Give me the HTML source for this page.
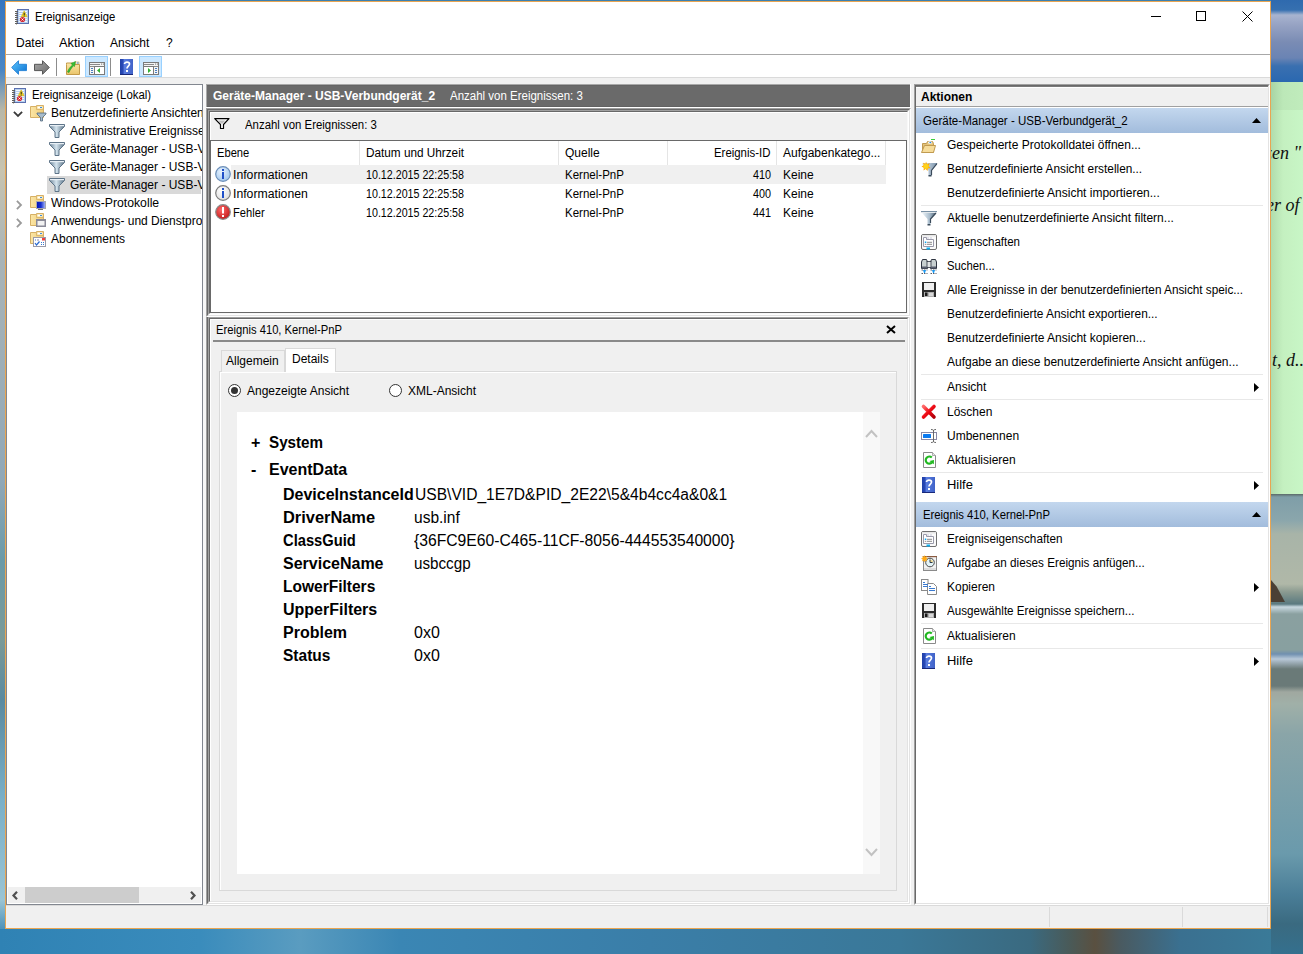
<!DOCTYPE html>
<html><head><meta charset="utf-8">
<style>
*{margin:0;padding:0;box-sizing:border-box}
html,body{width:1303px;height:954px;overflow:hidden}
body{position:relative;font-family:"Liberation Sans",sans-serif;font-size:12px;color:#000;background:#2f7aa6}
.a{position:absolute}
svg.a{display:block;overflow:visible}
.t{position:absolute;white-space:nowrap;line-height:18px;font-size:12px}
.clip{position:absolute;overflow:hidden}
</style></head><body>

<div class="a" style="left:0px;top:0px;width:1303px;height:954px;background:#3a7fb0"></div>
<div class="a" style="left:0px;top:0px;width:5px;height:954px;background:linear-gradient(180deg,#3576c0 0,#4a86c4 70px,#b8b8a8 110px,#c8c4b0 170px,#a8b4b8 260px,#90a8b8 480px,#6a9aa8 560px,#7a9a98 640px,#5a8aa0 700px,#7ab0c8 800px,#9ac4d4 900px,#4a90b8 930px,#3a86b0 954px)"></div>
<div class="clip" style="left:1271px;top:0;width:32px;height:954px"><div class="a" style="left:0;top:0;width:32px;height:82px;background:linear-gradient(180deg,#2f6aae 0,#3670b0 10px,#a8b4d0 15px,#98a4c4 24px,#7a8cb4 42px,#6a84b4 58px,#3a70b0 66px,#2a68b0 82px)"></div><div class="a" style="left:0;top:82px;width:32px;height:28px;background:linear-gradient(90deg,#a8d4a4 0,#bce8b8 12px,#c0ecbc 32px)"></div><div class="a" style="left:0;top:110px;width:32px;height:384px;background:linear-gradient(90deg,#b0dcac 0,#c4f0c0 12px,#c8f6c6 32px)"></div><div class="a" style="left:0;top:494px;width:32px;height:460px;background:linear-gradient(180deg,#5a6a68 0,#7f9ea8 3px,#8aa6ac 26px,#a8b4a8 40px,#b0b8a8 90px,#8a9a90 98px,#5a7a80 110px,#c8d8e0 113px,#8aa0a0 120px,#88a0a0 156px,#7090b0 160px,#b8c8d8 165px,#6a7a78 175px,#6a7a78 192px,#a0a8a0 198px,#a0b0a8 210px,#8aa5a8 240px,#6a9aac 360px,#4a7e98 400px,#3a6a80 430px,#34708e 460px)"></div><div class="a" style="left:0;top:580px;width:14px;height:22px;background:#4a4035;clip-path:polygon(0 0,40% 30%,100% 100%,0 100%)"></div><div class="t" style="left:-6px;top:143px;font-family:'Liberation Serif';font-style:italic;font-size:18px;line-height:20px;color:#111">zen "</div><div class="t" style="left:-5px;top:195px;font-family:'Liberation Serif';font-style:italic;font-size:18px;line-height:20px;color:#111">er of</div><div class="t" style="left:1px;top:350px;font-family:'Liberation Serif';font-style:italic;font-size:18px;line-height:20px;color:#111">t, d..</div></div>
<div class="a" style="left:0px;top:929px;width:1271px;height:25px;background:linear-gradient(90deg,#2f82b4 0,#3a8cbc 200px,#5a9cc0 300px,#3a86b4 400px,#3a7ea8 650px,#3a7898 900px,#3a6a80 1030px,#4a5a58 1070px,#5a5040 1095px,#4a5a60 1120px,#3a7090 1180px,#3a7a98 1271px)"></div>
<div class="a" style="left:5px;top:1px;width:1266px;height:928px;border:1px solid #e8a552;background:#fff"></div>
<div class="a" style="left:6px;top:77px;width:1264px;height:7px;background:#f0f0f0"></div>
<div class="a" style="left:6px;top:77px;width:1264px;height:1px;background:#dadada"></div>
<div class="a" style="left:6px;top:54px;width:1264px;height:1px;background:#a8a8a8"></div>
<div class="a" style="left:6px;top:905px;width:1264px;height:23px;background:#f0f0f0"></div>
<svg class="a" style="left:14px;top:8px" width="16" height="17" viewBox="0 0 16 17"><rect x="3.5" y="1.5" width="11" height="14" fill="#b8d0ee" stroke="#5a70b0"/><rect x="5" y="3" width="8" height="1" fill="#f4f8ff"/><rect x="5" y="5" width="8" height="1" fill="#f4f8ff"/><rect x="5" y="7" width="8" height="1" fill="#f4f8ff"/><rect x="5" y="9" width="8" height="1" fill="#f4f8ff"/><rect x="5" y="11" width="8" height="1" fill="#f4f8ff"/><rect x="5" y="13" width="8" height="1" fill="#f4f8ff"/><rect x="1" y="3" width="3" height="1" fill="#606060"/><rect x="2" y="4" width="1" height="1" fill="#c0c0c0"/><rect x="1" y="5" width="3" height="1" fill="#606060"/><rect x="2" y="6" width="1" height="1" fill="#c0c0c0"/><rect x="1" y="7" width="3" height="1" fill="#606060"/><rect x="2" y="8" width="1" height="1" fill="#c0c0c0"/><rect x="1" y="9" width="3" height="1" fill="#606060"/><rect x="2" y="10" width="1" height="1" fill="#c0c0c0"/><rect x="1" y="11" width="3" height="1" fill="#606060"/><rect x="2" y="12" width="1" height="1" fill="#c0c0c0"/><rect x="1" y="13" width="3" height="1" fill="#606060"/><rect x="2" y="14" width="1" height="1" fill="#c0c0c0"/><rect x="1" y="15" width="3" height="1" fill="#606060"/><rect x="2" y="16" width="1" height="1" fill="#c0c0c0"/><path d="M10.2 2.8 L13.2 8.8 L7.2 8.8 Z" fill="#f2d21e" stroke="#c8a818" stroke-width="0.5"/><rect x="9.7" y="4.8" width="1" height="2.5" fill="#222"/><rect x="9.7" y="7.7" width="1" height="0.8" fill="#222"/><circle cx="8.5" cy="11.5" r="2.6" fill="#d42a34"/><path d="M7.5 10.5 L9.5 12.5 M9.5 10.5 L7.5 12.5" stroke="#fff" stroke-width="0.9"/></svg>
<div class="t" style="left:35px;top:8px;font-size:12px;color:#000;transform:scaleX(0.94);transform-origin:0 0;">Ereignisanzeige</div>
<div class="a" style="left:1151px;top:16px;width:10px;height:1px;background:#000"></div>
<div class="a" style="left:1196px;top:11px;width:10px;height:10px;border:1px solid #000"></div>
<svg class="a" style="left:1242px;top:11px" width="11" height="11" viewBox="0 0 11 11"><path d="M0.5 0.5 L10.5 10.5 M10.5 0.5 L0.5 10.5" stroke="#000" stroke-width="1"/></svg>
<div class="t" style="left:16px;top:34px;font-size:12px;color:#000;">Datei</div>
<div class="t" style="left:59px;top:34px;font-size:12px;color:#000;transform:scaleX(1.07);transform-origin:0 0;">Aktion</div>
<div class="t" style="left:110px;top:34px;font-size:12px;color:#000;">Ansicht</div>
<div class="t" style="left:166px;top:34px;font-size:12px;color:#000;">?</div>
<svg class="a" style="left:11px;top:60px" width="17" height="16" viewBox="0 0 17 16"><defs><linearGradient id="ab" x1="0" x2="1" y1="0" y2="1"><stop offset="0" stop-color="#5cc8ff"/><stop offset="1" stop-color="#0a6fd0"/></linearGradient></defs><path d="M0.7 7.5 L7.5 0.7 L7.5 4.3 L15.5 4.3 L15.5 10.6 L7.5 10.6 L7.5 14.3 Z" fill="url(#ab)" stroke="#2b86d8" stroke-width="1"/></svg>
<svg class="a" style="left:34px;top:60px" width="17" height="16" viewBox="0 0 17 16"><defs><linearGradient id="af" x1="0" x2="1" y1="0" y2="1"><stop offset="0" stop-color="#a8a8a8"/><stop offset="1" stop-color="#6a6a6a"/></linearGradient></defs><path d="M15.3 7.5 L8.5 0.7 L8.5 4.3 L0.5 4.3 L0.5 10.6 L8.5 10.6 L8.5 14.3 Z" fill="url(#af)" stroke="#555" stroke-width="1"/></svg>
<div class="a" style="left:56px;top:58px;width:1px;height:18px;background:#8c8c8c"></div>
<svg class="a" style="left:65px;top:60px" width="16" height="16" viewBox="0 0 16 16"><defs><linearGradient id="fug" x1="0" x2="0" y1="0" y2="1"><stop offset="0" stop-color="#fbe7a8"/><stop offset="1" stop-color="#eac46a"/></linearGradient></defs><path d="M1.5 4.5 L1.5 14.5 L14.5 14.5 L14.5 4.5 L9 4.5 L8 3 L1.5 3 Z" fill="url(#fug)" stroke="#c39a48"/><rect x="10" y="2" width="4" height="2" fill="#fff" stroke="#c39a48" stroke-width="0.6"/><rect x="12" y="2.5" width="1.5" height="1" fill="#3a8ae0"/><path d="M2.5 12 C3.5 9 5 7 7.5 5 L6 3.5 L10.5 1.5 L9.5 6.5 L8.5 5.8 C6.5 8 5 10 4 12.5 Z" fill="#36c236" stroke="#1a8a1a" stroke-width="0.5"/></svg>
<div class="a" style="left:85px;top:56px;width:23px;height:21px;background:#cce8ff;border:1px solid #99d1ff"></div>
<svg class="a" style="left:89px;top:62px" width="16" height="13" viewBox="0 0 16 13"><rect x="0.5" y="0.5" width="15" height="12" fill="#f4f4f4" stroke="#7a7a7a"/><rect x="1" y="2" width="10" height="1" fill="#8a8a8a"/><rect x="12" y="1.5" width="1.2" height="1.2" fill="#8a8a8a"/><rect x="14" y="1.5" width="1.2" height="1.2" fill="#8a8a8a"/><rect x="1" y="4" width="14" height="1" fill="#8a8a8a"/><rect x="5.5" y="4.5" width="10" height="8" fill="#fff" stroke="#7a7a7a"/><rect x="2" y="6" width="2" height="1" fill="#4a7fc0"/><rect x="2" y="8" width="2" height="1" fill="#4a7fc0"/><rect x="2" y="10" width="2" height="1" fill="#4a7fc0"/><path d="M11 6 L8 8.5 L11 11 Z" fill="#32b032"/></svg>
<div class="a" style="left:110px;top:58px;width:1px;height:18px;background:#8c8c8c"></div>
<svg class="a" style="left:119px;top:59px" width="16" height="16" viewBox="0 0 16 16"><defs><linearGradient id="hpg" x1="0" x2="1"><stop offset="0" stop-color="#2040a8"/><stop offset=".25" stop-color="#2a4ab8"/><stop offset=".3" stop-color="#5a7ee0"/><stop offset="1" stop-color="#4062c8"/></linearGradient></defs><rect x="1" y="0" width="13" height="16" fill="url(#hpg)"/><rect x="1" y="15" width="13" height="1" fill="#18287a"/><path d="M5.5 5 C5.5 2.5 10.5 2.5 10.5 5 C10.5 7 8 7.2 8 9.5" fill="none" stroke="#fff" stroke-width="1.7"/><rect x="7" y="11" width="2" height="2" fill="#fff"/></svg>
<div class="a" style="left:139px;top:56px;width:23px;height:21px;background:#cce8ff;border:1px solid #99d1ff"></div>
<svg class="a" style="left:143px;top:62px" width="16" height="13" viewBox="0 0 16 13"><rect x="0.5" y="0.5" width="15" height="12" fill="#f4f4f4" stroke="#7a7a7a"/><rect x="1" y="2" width="10" height="1" fill="#8a8a8a"/><rect x="12" y="1.5" width="1.2" height="1.2" fill="#8a8a8a"/><rect x="14" y="1.5" width="1.2" height="1.2" fill="#8a8a8a"/><rect x="1" y="4" width="14" height="1" fill="#8a8a8a"/><rect x="0.5" y="4.5" width="10" height="8" fill="#fff" stroke="#7a7a7a"/><rect x="12" y="6" width="2" height="1" fill="#4a7fc0"/><rect x="12" y="8" width="2" height="1" fill="#4a7fc0"/><rect x="12" y="10" width="2" height="1" fill="#4a7fc0"/><path d="M5 6 L8 8.5 L5 11 Z" fill="#32b032"/></svg>
<!-- LEFT TREE PANEL -->
<div class="a" style="left:6px;top:84px;width:197px;height:821px;border:1px solid #828790;background:#fff"></div>
<div class="a" style="left:203px;top:84px;width:3px;height:821px;background:#f7f7f7"></div>
<div class="a" style="left:911px;top:84px;width:3px;height:821px;background:#f0f0f0"></div>

<!-- MIDDLE: dark header -->
<div class="a" style="left:206px;top:84px;width:704px;height:23px;background:#6a6a6a;border-top:1px solid #a8a8a8;border-bottom:1px solid #626262"></div><div class="a" style="left:206px;top:85px;width:704px;height:1px;background:#646464"></div><div class="a" style="left:206px;top:84px;width:1px;height:23px;background:#a8a8a8"></div>
<div class="a" style="left:206px;top:107px;width:705px;height:1px;background:#fff"></div>
<!-- upper outer -->
<div class="a" style="left:206px;top:108px;width:705px;height:209px;border-top:1px solid #a0a0a0;border-left:1px solid #a0a0a0;border-right:1px solid #fff;border-bottom:1px solid #fff;background:#f0f0f0"></div>
<div class="a" style="left:207px;top:109px;width:703px;height:207px;border-top:1px solid #696969;border-left:1px solid #696969;border-right:1px solid #e3e3e3;border-bottom:1px solid #e3e3e3"></div>
<!-- upper inner -->
<div class="a" style="left:208px;top:110px;width:701px;height:205px;border-top:1px solid #a0a0a0;border-left:1px solid #a0a0a0;border-right:1px solid #fff;border-bottom:1px solid #fff"></div>
<div class="a" style="left:209px;top:111px;width:699px;height:203px;border-top:1px solid #696969;border-left:1px solid #696969;border-right:1px solid #f8f8f8;border-bottom:1px solid #f8f8f8;background:#f0f0f0"></div>
<div class="a" style="left:210px;top:112px;width:697px;height:1px;background:#fff"></div>
<div class="a" style="left:210px;top:112px;width:1px;height:28px;background:#fff"></div>
<!-- list -->
<div class="a" style="left:210px;top:140px;width:697px;height:173px;border:1px solid #696969;border-right-color:#696969;background:#fff"></div>

<!-- lower outer -->
<div class="a" style="left:206px;top:317px;width:705px;height:588px;border-left:1px solid #a0a0a0;border-right:1px solid #fff;border-bottom:1px solid #fff"></div>
<div class="a" style="left:207px;top:317px;width:703px;height:587px;border-left:1px solid #696969;border-right:1px solid #e3e3e3;border-bottom:1px solid #e3e3e3"></div>
<!-- lower inner -->
<div class="a" style="left:208px;top:317px;width:701px;height:586px;border-top:1px solid #a0a0a0;border-left:1px solid #a0a0a0;border-right:1px solid #fff;border-bottom:1px solid #fff"></div>
<div class="a" style="left:209px;top:318px;width:699px;height:584px;border-top:1px solid #696969;border-left:1px solid #696969;border-right:1px solid #e3e3e3;border-bottom:1px solid #e3e3e3;background:#f0f0f0"></div>
<div class="a" style="left:210px;top:319px;width:697px;height:1px;background:#fff"></div>
<div class="a" style="left:210px;top:319px;width:1px;height:582px;background:#fff"></div>

<!-- RIGHT PANEL -->
<div class="a" style="left:914px;top:84px;width:356px;height:821px;border-top:1px solid #a0a0a0;border-left:1px solid #a0a0a0;border-right:1px solid #fff;border-bottom:1px solid #fff"></div>
<div class="a" style="left:915px;top:85px;width:354px;height:819px;border-top:1px solid #696969;border-left:1px solid #696969;border-right:1px solid #e3e3e3;border-bottom:1px solid #e3e3e3;background:#fff"></div>

<!-- status bar -->
<div class="a" style="left:6px;top:905px;width:1264px;height:1px;background:#dadada"></div>
<div class="a" style="left:1049px;top:907px;width:1px;height:20px;background:#dadada"></div>
<div class="a" style="left:1182px;top:907px;width:1px;height:20px;background:#dadada"></div>
<div class="a" style="left:1267px;top:907px;width:1px;height:20px;background:#dadada"></div>

<div class="clip" style="left:7px;top:85px;width:195px;height:819px"><div class="a" style="margin-left:-7px;margin-top:-85px;left:47px;top:176px;width:154px;height:18px;background:#d9d9d9"></div><svg class="a" style="margin-left:-7px;margin-top:-85px;left:11px;top:87px" width="16" height="17" viewBox="0 0 16 17"><rect x="3.5" y="1.5" width="11" height="14" fill="#b8d0ee" stroke="#5a70b0"/><rect x="5" y="3" width="8" height="1" fill="#f4f8ff"/><rect x="5" y="5" width="8" height="1" fill="#f4f8ff"/><rect x="5" y="7" width="8" height="1" fill="#f4f8ff"/><rect x="5" y="9" width="8" height="1" fill="#f4f8ff"/><rect x="5" y="11" width="8" height="1" fill="#f4f8ff"/><rect x="5" y="13" width="8" height="1" fill="#f4f8ff"/><rect x="1" y="3" width="3" height="1" fill="#606060"/><rect x="2" y="4" width="1" height="1" fill="#c0c0c0"/><rect x="1" y="5" width="3" height="1" fill="#606060"/><rect x="2" y="6" width="1" height="1" fill="#c0c0c0"/><rect x="1" y="7" width="3" height="1" fill="#606060"/><rect x="2" y="8" width="1" height="1" fill="#c0c0c0"/><rect x="1" y="9" width="3" height="1" fill="#606060"/><rect x="2" y="10" width="1" height="1" fill="#c0c0c0"/><rect x="1" y="11" width="3" height="1" fill="#606060"/><rect x="2" y="12" width="1" height="1" fill="#c0c0c0"/><rect x="1" y="13" width="3" height="1" fill="#606060"/><rect x="2" y="14" width="1" height="1" fill="#c0c0c0"/><rect x="1" y="15" width="3" height="1" fill="#606060"/><rect x="2" y="16" width="1" height="1" fill="#c0c0c0"/><path d="M10.2 2.8 L13.2 8.8 L7.2 8.8 Z" fill="#f2d21e" stroke="#c8a818" stroke-width="0.5"/><rect x="9.7" y="4.8" width="1" height="2.5" fill="#222"/><rect x="9.7" y="7.7" width="1" height="0.8" fill="#222"/><circle cx="8.5" cy="11.5" r="2.6" fill="#d42a34"/><path d="M7.5 10.5 L9.5 12.5 M9.5 10.5 L7.5 12.5" stroke="#fff" stroke-width="0.9"/></svg><div class="t" style="margin-left:-7px;margin-top:-85px;left:32px;top:86px;font-size:12px;color:#000;transform:scaleX(0.95);transform-origin:0 0;">Ereignisanzeige (Lokal)</div><svg class="a" style="margin-left:-7px;margin-top:-85px;left:13px;top:111px" width="10" height="6" viewBox="0 0 10 6"><path d="M0.9 0.9 L5 5 L9.1 0.9" fill="none" stroke="#3a3a3a" stroke-width="1.8"/></svg><svg class="a" style="margin-left:-7px;margin-top:-85px;left:30px;top:105px" width="18" height="17" viewBox="0 0 18 17"><defs><linearGradient id="fdg" x1="0" x2="1"><stop offset="0" stop-color="#fbe6a6"/><stop offset="1" stop-color="#f0cc78"/></linearGradient></defs><path d="M0.5 1.5 L6.5 1.5 L6.5 0.5 L13.5 0.5 L13.5 12.5 L0.5 12.5 Z" fill="url(#fdg)" stroke="#d6b066"/><path d="M6.5 1.5 L6.5 4.5 L13.5 4.5" fill="none" stroke="#d6b066" stroke-width="0.8"/><rect x="7.5" y="1.5" width="5" height="2" fill="#fff"/><rect x="10" y="2" width="2" height="1" fill="#3a90e0"/><path d="M7 8 L16 8 L16 9 L12.5 12.5 L12.5 16 L10.5 16 L10.5 12.5 L7 9 Z" fill="#a8bccc" stroke="#50687c" stroke-width="0.8"/></svg><div class="t" style="margin-left:-7px;margin-top:-85px;left:51px;top:104px;font-size:12px;color:#000;">Benutzerdefinierte Ansichten</div><svg class="a" style="margin-left:-7px;margin-top:-85px;left:49px;top:124px" width="16" height="15" viewBox="0 0 16 15"><defs><linearGradient id="fg" x1="0" x2="1"><stop offset="0" stop-color="#6a8296"/><stop offset=".45" stop-color="#d4e4ee"/><stop offset="1" stop-color="#5a7286"/></linearGradient></defs><path d="M0.5 0.5 L15.5 0.5 L15.5 2.5 L10 8 L10 13.5 L6 13.5 L6 8 L0.5 2.5 Z" fill="url(#fg)" stroke="#5e7488" stroke-width="1"/><rect x="1" y="1" width="14" height="1.2" fill="#e8f0f6"/></svg><div class="t" style="margin-left:-7px;margin-top:-85px;left:70px;top:122px;font-size:12px;color:#000;">Administrative Ereignisse</div><svg class="a" style="margin-left:-7px;margin-top:-85px;left:49px;top:142px" width="16" height="15" viewBox="0 0 16 15"><defs><linearGradient id="fg" x1="0" x2="1"><stop offset="0" stop-color="#6a8296"/><stop offset=".45" stop-color="#d4e4ee"/><stop offset="1" stop-color="#5a7286"/></linearGradient></defs><path d="M0.5 0.5 L15.5 0.5 L15.5 2.5 L10 8 L10 13.5 L6 13.5 L6 8 L0.5 2.5 Z" fill="url(#fg)" stroke="#5e7488" stroke-width="1"/><rect x="1" y="1" width="14" height="1.2" fill="#e8f0f6"/></svg><div class="t" style="margin-left:-7px;margin-top:-85px;left:70px;top:140px;font-size:12px;color:#000;">Geräte-Manager - USB-Verbundgerät</div><svg class="a" style="margin-left:-7px;margin-top:-85px;left:49px;top:160px" width="16" height="15" viewBox="0 0 16 15"><defs><linearGradient id="fg" x1="0" x2="1"><stop offset="0" stop-color="#6a8296"/><stop offset=".45" stop-color="#d4e4ee"/><stop offset="1" stop-color="#5a7286"/></linearGradient></defs><path d="M0.5 0.5 L15.5 0.5 L15.5 2.5 L10 8 L10 13.5 L6 13.5 L6 8 L0.5 2.5 Z" fill="url(#fg)" stroke="#5e7488" stroke-width="1"/><rect x="1" y="1" width="14" height="1.2" fill="#e8f0f6"/></svg><div class="t" style="margin-left:-7px;margin-top:-85px;left:70px;top:158px;font-size:12px;color:#000;">Geräte-Manager - USB-Verbundgerät</div><svg class="a" style="margin-left:-7px;margin-top:-85px;left:49px;top:178px" width="16" height="15" viewBox="0 0 16 15"><defs><linearGradient id="fg" x1="0" x2="1"><stop offset="0" stop-color="#6a8296"/><stop offset=".45" stop-color="#d4e4ee"/><stop offset="1" stop-color="#5a7286"/></linearGradient></defs><path d="M0.5 0.5 L15.5 0.5 L15.5 2.5 L10 8 L10 13.5 L6 13.5 L6 8 L0.5 2.5 Z" fill="url(#fg)" stroke="#5e7488" stroke-width="1"/><rect x="1" y="1" width="14" height="1.2" fill="#e8f0f6"/></svg><div class="t" style="margin-left:-7px;margin-top:-85px;left:70px;top:176px;font-size:12px;color:#000;">Geräte-Manager - USB-Verbundgerät_2</div><svg class="a" style="margin-left:-7px;margin-top:-85px;left:16px;top:200px" width="6" height="10" viewBox="0 0 6 10"><path d="M0.9 0.9 L5 5 L0.9 9.1" fill="none" stroke="#9a9a9a" stroke-width="1.8"/></svg><svg class="a" style="margin-left:-7px;margin-top:-85px;left:30px;top:195px" width="18" height="17" viewBox="0 0 18 17"><defs><linearGradient id="fdg" x1="0" x2="1"><stop offset="0" stop-color="#fbe6a6"/><stop offset="1" stop-color="#f0cc78"/></linearGradient></defs><path d="M0.5 1.5 L6.5 1.5 L6.5 0.5 L13.5 0.5 L13.5 12.5 L0.5 12.5 Z" fill="url(#fdg)" stroke="#d6b066"/><path d="M6.5 1.5 L6.5 4.5 L13.5 4.5" fill="none" stroke="#d6b066" stroke-width="0.8"/><rect x="7.5" y="1.5" width="5" height="2" fill="#fff"/><rect x="10" y="2" width="2" height="1" fill="#3a90e0"/><defs><linearGradient id="mong" x1="0" x2="1"><stop offset="0" stop-color="#0010b8"/><stop offset=".5" stop-color="#1830d0"/><stop offset="1" stop-color="#b0c0f8"/></linearGradient></defs><rect x="6.5" y="6.5" width="9" height="7" fill="url(#mong)" stroke="#a8a8b0"/><rect x="8" y="14" width="5" height="1" fill="#707070"/></svg><div class="t" style="margin-left:-7px;margin-top:-85px;left:51px;top:194px;font-size:12px;color:#000;transform:scaleX(1.02);transform-origin:0 0;">Windows-Protokolle</div><svg class="a" style="margin-left:-7px;margin-top:-85px;left:16px;top:218px" width="6" height="10" viewBox="0 0 6 10"><path d="M0.9 0.9 L5 5 L0.9 9.1" fill="none" stroke="#9a9a9a" stroke-width="1.8"/></svg><svg class="a" style="margin-left:-7px;margin-top:-85px;left:30px;top:213px" width="18" height="17" viewBox="0 0 18 17"><defs><linearGradient id="fdg" x1="0" x2="1"><stop offset="0" stop-color="#fbe6a6"/><stop offset="1" stop-color="#f0cc78"/></linearGradient></defs><path d="M0.5 1.5 L6.5 1.5 L6.5 0.5 L13.5 0.5 L13.5 12.5 L0.5 12.5 Z" fill="url(#fdg)" stroke="#d6b066"/><path d="M6.5 1.5 L6.5 4.5 L13.5 4.5" fill="none" stroke="#d6b066" stroke-width="0.8"/><rect x="7.5" y="1.5" width="5" height="2" fill="#fff"/><rect x="10" y="2" width="2" height="1" fill="#3a90e0"/><rect x="6.75" y="6.75" width="8.5" height="6.5" fill="#f2f2f2" stroke="#8a8a98" stroke-width="1.5"/><rect x="6" y="6" width="10" height="2" fill="#8a8a98"/></svg><div class="t" style="margin-left:-7px;margin-top:-85px;left:51px;top:212px;font-size:12px;color:#000;">Anwendungs- und Dienstprotokolle</div><svg class="a" style="margin-left:-7px;margin-top:-85px;left:30px;top:231px" width="18" height="17" viewBox="0 0 18 17"><defs><linearGradient id="fdg" x1="0" x2="1"><stop offset="0" stop-color="#fbe6a6"/><stop offset="1" stop-color="#f0cc78"/></linearGradient></defs><path d="M0.5 1.5 L6.5 1.5 L6.5 0.5 L13.5 0.5 L13.5 12.5 L0.5 12.5 Z" fill="url(#fdg)" stroke="#d6b066"/><path d="M6.5 1.5 L6.5 4.5 L13.5 4.5" fill="none" stroke="#d6b066" stroke-width="0.8"/><rect x="7.5" y="1.5" width="5" height="2" fill="#fff"/><rect x="10" y="2" width="2" height="1" fill="#3a90e0"/><rect x="3.5" y="6.5" width="12" height="9" fill="#fff" stroke="#9a9aa8"/><rect x="12" y="7" width="3" height="2.5" fill="#f04040"/><rect x="5" y="8.5" width="1" height="1" fill="#3a7ad0"/><rect x="7" y="8.5" width="2" height="1" fill="#8a8ab0"/><rect x="11" y="11" width="1" height="1" fill="#3a7ad0"/><rect x="13" y="11" width="1" height="1" fill="#3a7ad0"/><rect x="11" y="13" width="1" height="1" fill="#3a7ad0"/><rect x="13" y="13" width="1" height="1" fill="#3a7ad0"/><path d="M5 12 L6.5 14 L9.5 10.5" fill="none" stroke="#2a6ad0" stroke-width="1.2"/></svg><div class="t" style="margin-left:-7px;margin-top:-85px;left:51px;top:230px;font-size:12px;color:#000;">Abonnements</div></div>
<div class="a" style="left:8px;top:887px;width:193px;height:16px;background:#f0f0f0"></div>
<div class="a" style="left:25px;top:887px;width:114px;height:16px;background:#cdcdcd"></div>
<svg class="a" style="left:12px;top:891px" width="6" height="9" viewBox="0 0 6 9"><path d="M5 0.8 L1.5 4.5 L5 8.2" fill="none" stroke="#505050" stroke-width="2.2"/></svg>
<svg class="a" style="left:190px;top:891px" width="6" height="9" viewBox="0 0 6 9"><path d="M1 0.8 L4.5 4.5 L1 8.2" fill="none" stroke="#505050" stroke-width="2.2"/></svg>
<div class="t" style="left:213px;top:87px;font-size:12px;font-weight:bold;color:#fff;">Geräte-Manager - USB-Verbundgerät_2</div><div class="t" style="left:450px;top:87px;font-size:12px;color:#fff;transform:scaleX(0.957);transform-origin:0 0;">Anzahl von Ereignissen: 3</div><svg class="a" style="left:214px;top:118px" width="16" height="12" viewBox="0 0 16 12"><path d="M0.7 0.7 L15 0.7 L9.5 6.5 L9.5 10.5 L6.5 10.5 L6.5 6.5 Z" fill="#fff" stroke="#000" stroke-width="1.2" stroke-linejoin="round"/><path d="M4 2.5 L11.5 2.5 L8 6 Z" fill="#bdbdbd"/></svg><div class="t" style="left:245px;top:116px;font-size:12px;color:#000;transform:scaleX(0.95);transform-origin:0 0;">Anzahl von Ereignissen: 3</div><div class="t" style="left:217px;top:144px;font-size:12px;color:#000;transform:scaleX(0.93);transform-origin:0 0;">Ebene</div><div class="t" style="left:366px;top:144px;font-size:12px;color:#000;transform:scaleX(0.98);transform-origin:0 0;">Datum und Uhrzeit</div><div class="t" style="left:565px;top:144px;font-size:12px;color:#000;">Quelle</div><div class="t" style="left:714px;top:144px;font-size:12px;color:#000;transform:scaleX(0.95);transform-origin:0 0;">Ereignis-ID</div><div class="t" style="left:783px;top:144px;font-size:12px;color:#000;">Aufgabenkatego...</div><div class="a" style="left:359px;top:141px;width:1px;height:24px;background:#e5e5e5"></div><div class="a" style="left:558px;top:141px;width:1px;height:24px;background:#e5e5e5"></div><div class="a" style="left:667px;top:141px;width:1px;height:24px;background:#e5e5e5"></div><div class="a" style="left:776px;top:141px;width:1px;height:24px;background:#e5e5e5"></div><div class="a" style="left:885px;top:141px;width:1px;height:24px;background:#e5e5e5"></div><div class="a" style="left:231px;top:165px;width:655px;height:19px;background:#f0f0f0"></div><svg class="a" style="left:215px;top:166px" width="16" height="16" viewBox="0 0 16 16"><defs><radialGradient id="ib" cx=".4" cy=".35" r=".7"><stop offset="0" stop-color="#eaf4ff"/><stop offset="1" stop-color="#9cc4ec"/></radialGradient></defs><circle cx="8" cy="8" r="7.3" fill="url(#ib)" stroke="#6d8fb8" stroke-width="1.2"/><rect x="7" y="3" width="2" height="2" fill="#1f4fc8"/><rect x="7" y="6" width="2" height="7" fill="#1f4fc8"/></svg><div class="t" style="left:233px;top:166px;font-size:12px;color:#000;transform:scaleX(1.02);transform-origin:0 0;">Informationen</div><div class="t" style="left:366px;top:166px;font-size:12px;color:#000;transform:scaleX(0.89);transform-origin:0 0;">10.12.2015 22:25:58</div><div class="t" style="left:565px;top:166px;font-size:12px;color:#000;transform:scaleX(0.96);transform-origin:0 0;">Kernel-PnP</div><div class="t" style="left:700px;width:71px;text-align:right;top:166px;transform:scaleX(0.9);transform-origin:100% 0">410</div><div class="t" style="left:783px;top:166px;font-size:12px;color:#000;">Keine</div><svg class="a" style="left:215px;top:185px" width="16" height="16" viewBox="0 0 16 16"><defs><radialGradient id="iw" cx=".4" cy=".35" r=".7"><stop offset="0" stop-color="#ffffff"/><stop offset="1" stop-color="#dcdcdc"/></radialGradient></defs><circle cx="8" cy="8" r="7.3" fill="url(#iw)" stroke="#7d7d7d" stroke-width="1.2"/><rect x="7" y="3" width="2" height="2" fill="#1f4fc8"/><rect x="7" y="6" width="2" height="7" fill="#1f4fc8"/></svg><div class="t" style="left:233px;top:185px;font-size:12px;color:#000;transform:scaleX(1.02);transform-origin:0 0;">Informationen</div><div class="t" style="left:366px;top:185px;font-size:12px;color:#000;transform:scaleX(0.89);transform-origin:0 0;">10.12.2015 22:25:58</div><div class="t" style="left:565px;top:185px;font-size:12px;color:#000;transform:scaleX(0.96);transform-origin:0 0;">Kernel-PnP</div><div class="t" style="left:700px;width:71px;text-align:right;top:185px;transform:scaleX(0.9);transform-origin:100% 0">400</div><div class="t" style="left:783px;top:185px;font-size:12px;color:#000;">Keine</div><svg class="a" style="left:215px;top:204px" width="16" height="16" viewBox="0 0 16 16"><defs><radialGradient id="er" cx=".4" cy=".35" r=".7"><stop offset="0" stop-color="#ff6a6a"/><stop offset="1" stop-color="#c01818"/></radialGradient></defs><circle cx="8" cy="8" r="7.3" fill="url(#er)" stroke="#8a8a8a" stroke-width="1.2"/><rect x="7" y="3" width="2" height="6.5" fill="#fff"/><rect x="7" y="11" width="2" height="2" fill="#fff"/></svg><div class="t" style="left:233px;top:204px;font-size:12px;color:#000;transform:scaleX(0.93);transform-origin:0 0;">Fehler</div><div class="t" style="left:366px;top:204px;font-size:12px;color:#000;transform:scaleX(0.89);transform-origin:0 0;">10.12.2015 22:25:58</div><div class="t" style="left:565px;top:204px;font-size:12px;color:#000;transform:scaleX(0.96);transform-origin:0 0;">Kernel-PnP</div><div class="t" style="left:700px;width:71px;text-align:right;top:204px;transform:scaleX(0.9);transform-origin:100% 0">441</div><div class="t" style="left:783px;top:204px;font-size:12px;color:#000;">Keine</div><div class="t" style="left:216px;top:321px;font-size:12px;color:#000;transform:scaleX(0.935);transform-origin:0 0;">Ereignis 410, Kernel-PnP</div><svg class="a" style="left:886px;top:325px" width="10" height="9" viewBox="0 0 10 9"><path d="M1 1 L9 8 M9 1 L1 8" stroke="#000" stroke-width="2"/></svg><div class="a" style="left:213px;top:340px;width:692px;height:2px;background:#8a8a8a"></div><div class="a" style="left:219px;top:371px;width:678px;height:520px;background:#f0f0f0;border:1px solid #d9d9d9"></div><div class="a" style="left:220px;top:372px;width:676px;height:518px;border-top:1px solid #fff;border-left:1px solid #fff"></div><div class="a" style="left:221px;top:350px;width:64px;height:22px;background:#f0f0f0;border:1px solid #d9d9d9;border-bottom:none"></div><div class="a" style="left:285px;top:348px;width:51px;height:24px;background:#fff;border:1px solid #d9d9d9;border-bottom:none"></div><div class="t" style="left:226px;top:352px;font-size:12px;color:#000;">Allgemein</div><div class="t" style="left:292px;top:350px;font-size:12px;color:#000;">Details</div><svg class="a" style="left:228px;top:384px" width="13" height="13" viewBox="0 0 13 13"><circle cx="6.5" cy="6.5" r="6" fill="#fff" stroke="#333" stroke-width="1"/><circle cx="6.5" cy="6.5" r="3.5" fill="#333"/></svg><div class="t" style="left:247px;top:382px;font-size:12px;color:#000;">Angezeigte Ansicht</div><svg class="a" style="left:389px;top:384px" width="13" height="13" viewBox="0 0 13 13"><circle cx="6.5" cy="6.5" r="6" fill="#fff" stroke="#333" stroke-width="1"/></svg><div class="t" style="left:408px;top:382px;font-size:12px;color:#000;">XML-Ansicht</div><div class="a" style="left:237px;top:412px;width:643px;height:462px;background:#fff"></div><div class="a" style="left:863px;top:412px;width:17px;height:462px;background:#f8f8f8"></div><svg class="a" style="left:865px;top:429px" width="13" height="9" viewBox="0 0 13 9"><path d="M1 8 L6.5 2 L12 8" fill="none" stroke="#c2c2c2" stroke-width="2"/></svg><svg class="a" style="left:865px;top:848px" width="13" height="9" viewBox="0 0 13 9"><path d="M1 1 L6.5 7 L12 1" fill="none" stroke="#c2c2c2" stroke-width="2"/></svg><div class="t" style="left:251px;top:434px;font-size:16px;font-weight:bold;color:#000;">+</div><div class="t" style="left:269px;top:434px;font-size:16px;font-weight:bold;color:#000;transform:scaleX(0.95);transform-origin:0 0;">System</div><div class="t" style="left:251px;top:461px;font-size:16px;font-weight:bold;color:#000;">-</div><div class="t" style="left:269px;top:461px;font-size:16px;font-weight:bold;color:#000;">EventData</div><div class="t" style="left:283px;top:486px;font-size:16px;font-weight:bold;color:#000;">DeviceInstanceId</div><div class="t" style="left:415px;top:486px;font-size:16px;color:#000;transform:scaleX(0.975);transform-origin:0 0;">USB\VID_1E7D&amp;PID_2E22\5&amp;4b4cc4a&amp;0&amp;1</div><div class="t" style="left:283px;top:509px;font-size:16px;font-weight:bold;color:#000;transform:scaleX(1.025);transform-origin:0 0;">DriverName</div><div class="t" style="left:414px;top:509px;font-size:16px;color:#000;transform:scaleX(0.97);transform-origin:0 0;">usb.inf</div><div class="t" style="left:283px;top:532px;font-size:16px;font-weight:bold;color:#000;transform:scaleX(0.92);transform-origin:0 0;">ClassGuid</div><div class="t" style="left:414px;top:532px;font-size:16px;color:#000;transform:scaleX(0.98);transform-origin:0 0;">{36FC9E60-C465-11CF-8056-444553540000}</div><div class="t" style="left:283px;top:555px;font-size:16px;font-weight:bold;color:#000;">ServiceName</div><div class="t" style="left:414px;top:555px;font-size:16px;color:#000;transform:scaleX(0.95);transform-origin:0 0;">usbccgp</div><div class="t" style="left:283px;top:578px;font-size:16px;font-weight:bold;color:#000;transform:scaleX(0.97);transform-origin:0 0;">LowerFilters</div><div class="t" style="left:283px;top:601px;font-size:16px;font-weight:bold;color:#000;">UpperFilters</div><div class="t" style="left:283px;top:624px;font-size:16px;font-weight:bold;color:#000;">Problem</div><div class="t" style="left:414px;top:624px;font-size:16px;color:#000;">0x0</div><div class="t" style="left:283px;top:647px;font-size:16px;font-weight:bold;color:#000;transform:scaleX(0.97);transform-origin:0 0;">Status</div><div class="t" style="left:414px;top:647px;font-size:16px;color:#000;">0x0</div>
<div class="a" style="left:916px;top:86px;width:352px;height:20px;background:#f0f0f0"></div><div class="a" style="left:916px;top:86px;width:352px;height:1px;background:#7a7a7a"></div><div class="a" style="left:916px;top:87px;width:352px;height:1px;background:#fff"></div><div class="a" style="left:916px;top:106px;width:352px;height:1px;background:#a0a0a0"></div><div class="t" style="left:921px;top:88px;font-size:12px;font-weight:bold;color:#000;">Aktionen</div><div class="a" style="left:916px;top:108px;width:352px;height:25px;background:linear-gradient(180deg,#c3d7ee,#a2bcdc)"></div><div class="t" style="left:923px;top:112px;font-size:12px;color:#000;transform:scaleX(0.962);transform-origin:0 0;">Geräte-Manager - USB-Verbundgerät_2</div><svg class="a" style="left:1252px;top:118px" width="9" height="5" viewBox="0 0 9 5"><path d="M0 5 L4.5 0 L9 5 Z" fill="#000"/></svg><div class="t" style="left:947px;top:136px;font-size:12px;color:#000;">Gespeicherte Protokolldatei öffnen...</div><svg class="a" style="left:921px;top:137px" width="16" height="17" viewBox="0 0 16 17"><rect x="10" y="2" width="4" height="1" fill="#3ccf3c"/><path d="M1.5 6.5 L5.5 6.5 L6.5 4.5 L11.5 4.5 L12.5 6.5 L12.5 15.5 L1.5 15.5 Z" fill="#e3c27a" stroke="#c09a50"/><ellipse cx="9" cy="5.5" rx="2" ry="1.2" fill="#fff"/><ellipse cx="9.3" cy="5.5" rx="1" ry="0.8" fill="#2a8ae0"/><path d="M3.5 8.5 L14.5 8.5 L12.5 15.5 L0.5 15.5 Z" fill="#f6dc9a" stroke="#c09a50"/></svg><div class="t" style="left:947px;top:160px;font-size:12px;color:#000;transform:scaleX(0.985);transform-origin:0 0;">Benutzerdefinierte Ansicht erstellen...</div><svg class="a" style="left:921px;top:161px" width="17" height="17" viewBox="0 0 17 17"><defs><linearGradient id="fcg" x1="0" x2="1"><stop offset="0" stop-color="#e8f2fa"/><stop offset="1" stop-color="#7890a8"/></linearGradient></defs><path d="M1 2 L16 2 L16 3.5 L10.5 9.5 L10.5 15 L7.5 15 L7.5 9.5 L1 3.5 Z" fill="url(#fcg)"/><path d="M16 2.5 L10.5 9.5 L10.5 14" fill="none" stroke="#3a4a5a" stroke-width="1.2"/><rect x="7.5" y="14" width="3" height="1.5" fill="#3a4a5a"/><path d="M5 0.5 L6 3 L8.8 2.2 L7.5 5 L9.5 7 L6.8 7.4 L6.5 10 L4.8 8 L2.5 9.5 L2.8 6.8 L0.5 5.5 L2.8 4.2 L2 1.8 L4.5 2.8 Z" fill="#ffa800"/><circle cx="5" cy="5.3" r="2.6" fill="#ffd21a"/></svg><div class="t" style="left:947px;top:184px;font-size:12px;color:#000;">Benutzerdefinierte Ansicht importieren...</div><div class="a" style="left:921px;top:205px;width:342px;height:1px;background:#e8e8e8"></div><div class="t" style="left:947px;top:209px;font-size:12px;color:#000;">Aktuelle benutzerdefinierte Ansicht filtern...</div><svg class="a" style="left:921px;top:210px" width="16" height="16" viewBox="0 0 16 16"><defs><linearGradient id="fng" x1="0" x2="1"><stop offset="0" stop-color="#f2f8fc"/><stop offset=".55" stop-color="#a8bccc"/><stop offset="1" stop-color="#4a5e70"/></linearGradient></defs><rect x="0" y="1" width="16" height="1.2" fill="#7890a4"/><path d="M1 3 L15 3 L9.5 9 L9.5 14 L6.5 14 L6.5 9 Z" fill="url(#fng)"/><path d="M15 3 L9.5 9 L9.5 13" fill="none" stroke="#3a4a5a" stroke-width="1.2"/><rect x="6.5" y="14" width="3" height="1.5" fill="#3a4a5a"/></svg><div class="t" style="left:947px;top:233px;font-size:12px;color:#000;transform:scaleX(0.96);transform-origin:0 0;">Eigenschaften</div><svg class="a" style="left:921px;top:234px" width="16" height="16" viewBox="0 0 16 16"><rect x="0.5" y="0.5" width="15" height="15" rx="1.5" fill="#fafafa" stroke="#707070"/><rect x="1" y="1" width="14" height="1.5" fill="#e6e6e6"/><path d="M2.5 3.5 L5.5 3.5 L5.5 5.5 L12.5 5.5 L12.5 12.5 L2.5 12.5 Z" fill="#fff" stroke="#9a9aaa"/><rect x="6" y="3.5" width="2" height="1" fill="#c8c8d8"/><rect x="9" y="3.5" width="2" height="1" fill="#c8c8d8"/><rect x="3.8" y="7.5" width="1.5" height="1.5" fill="#10a8f0"/><rect x="6" y="7.8" width="5" height="1" fill="#8a8a8a"/><rect x="3.8" y="9.8" width="1.5" height="1" fill="#8a8a8a"/><rect x="6" y="9.8" width="5" height="1" fill="#8a8a8a"/><rect x="5.5" y="13.5" width="3.5" height="2" fill="#10b0f0"/></svg><div class="t" style="left:947px;top:257px;font-size:12px;color:#000;transform:scaleX(0.94);transform-origin:0 0;">Suchen...</div><svg class="a" style="left:921px;top:258px" width="16" height="16" viewBox="0 0 16 16"><path d="M1.5 1.5 L5.5 1.5 L6.5 4 L6.5 10.5 L0.5 10.5 L0.5 4 Z" fill="#c8d0d0" stroke="#2e3440"/><path d="M10.5 1.5 L14.5 1.5 L15.5 4 L15.5 10.5 L9.5 10.5 L9.5 4 Z" fill="#c8d0d0" stroke="#2e3440"/><rect x="6" y="3.5" width="4" height="6" fill="#e0e4e4" stroke="#2e3440" stroke-width="0.8"/><rect x="1" y="8.5" width="5" height="2" fill="#5a6070"/><rect x="10" y="8.5" width="5" height="2" fill="#5a6070"/><path d="M0.5 12 L6.5 12 M0.5 15.5 L6.5 15.5 M9.5 12 L15.5 12 M9.5 15.5 L15.5 15.5" stroke="#2e3440" stroke-width="0.8" stroke-dasharray="1.5 1"/><path d="M2 12 L5 12 L4 15 L3 15 Z" fill="#1a98f0"/><path d="M11 12 L14 12 L13 15 L12 15 Z" fill="#1a98f0"/></svg><div class="t" style="left:947px;top:281px;font-size:12px;color:#000;transform:scaleX(0.98);transform-origin:0 0;">Alle Ereignisse in der benutzerdefinierten Ansicht speic...</div><svg class="a" style="left:921px;top:282px" width="16" height="16" viewBox="0 0 16 16"><path d="M1 0 L15 0 L15 15 L1 15 Z" fill="#2c2c2c"/><rect x="3" y="1" width="10" height="7" fill="#efefef"/><rect x="3" y="10" width="10" height="5" fill="#b0b0b0"/><rect x="4" y="10.5" width="2.5" height="3.5" fill="#1a1a1a"/><rect x="8" y="11" width="4" height="3" fill="#d8d8d8"/></svg><div class="t" style="left:947px;top:305px;font-size:12px;color:#000;transform:scaleX(0.99);transform-origin:0 0;">Benutzerdefinierte Ansicht exportieren...</div><div class="t" style="left:947px;top:329px;font-size:12px;color:#000;">Benutzerdefinierte Ansicht kopieren...</div><div class="t" style="left:947px;top:353px;font-size:12px;color:#000;">Aufgabe an diese benutzerdefinierte Ansicht anfügen...</div><div class="a" style="left:921px;top:374px;width:342px;height:1px;background:#e8e8e8"></div><div class="t" style="left:947px;top:378px;font-size:12px;color:#000;">Ansicht</div><svg class="a" style="left:1254px;top:383px" width="5" height="9" viewBox="0 0 5 9"><path d="M0 0 L5 4.5 L0 9 Z" fill="#000"/></svg><div class="a" style="left:921px;top:399px;width:342px;height:1px;background:#e8e8e8"></div><div class="t" style="left:947px;top:403px;font-size:12px;color:#000;">Löschen</div><svg class="a" style="left:921px;top:404px" width="16" height="16" viewBox="0 0 16 16"><defs><linearGradient id="dg" x1="0" x2="1" y1="0" y2="1"><stop offset="0" stop-color="#ff6a6a"/><stop offset=".5" stop-color="#ee0a14"/><stop offset="1" stop-color="#b0000a"/></linearGradient></defs><path d="M2.5 2.5 L13 13 M13 2.5 L2.5 13" stroke="url(#dg)" stroke-width="3.6" stroke-linecap="round"/></svg><div class="t" style="left:947px;top:427px;font-size:12px;color:#000;">Umbenennen</div><svg class="a" style="left:921px;top:428px" width="16" height="16" viewBox="0 0 16 16"><rect x="0.5" y="4.5" width="15" height="7" fill="#fff" stroke="#8a8aa8"/><rect x="2" y="6" width="8" height="4" rx="0.5" fill="#0a7af0"/><path d="M12.5 2 L12.5 14 M10 1.5 C11.5 1.5 12.5 2 12.5 2.5 C12.5 2 13.5 1.5 15 1.5 M10 14.5 C11.5 14.5 12.5 14 12.5 13.5 C12.5 14 13.5 14.5 15 14.5" fill="none" stroke="#6a6a6a" stroke-width="1"/></svg><div class="t" style="left:947px;top:451px;font-size:12px;color:#000;">Aktualisieren</div><svg class="a" style="left:921px;top:452px" width="16" height="16" viewBox="0 0 16 16"><path d="M2.5 0.5 L11.5 0.5 L14.5 3.5 L14.5 15.5 L2.5 15.5 Z" fill="#fff" stroke="#8a8a8a"/><path d="M11.5 0.5 L11.5 3.5 L14.5 3.5" fill="#e8e8e8" stroke="#9a9a9a" stroke-width="0.8"/><path d="M11 10.5 A3.6 3.6 0 1 1 10.8 5.5" fill="none" stroke="#20b820" stroke-width="2.2"/><path d="M8.5 9 L12.8 12.2 L13 8 Z" fill="#20b820"/></svg><div class="a" style="left:921px;top:472px;width:342px;height:1px;background:#e8e8e8"></div><div class="t" style="left:947px;top:476px;font-size:12px;color:#000;transform:scaleX(1.08);transform-origin:0 0;">Hilfe</div><svg class="a" style="left:921px;top:477px" width="16" height="16" viewBox="0 0 16 16"><defs><linearGradient id="hpg" x1="0" x2="1"><stop offset="0" stop-color="#2040a8"/><stop offset=".25" stop-color="#2a4ab8"/><stop offset=".3" stop-color="#5a7ee0"/><stop offset="1" stop-color="#4062c8"/></linearGradient></defs><rect x="1" y="0" width="13" height="16" fill="url(#hpg)"/><rect x="1" y="15" width="13" height="1" fill="#18287a"/><path d="M5.5 5 C5.5 2.5 10.5 2.5 10.5 5 C10.5 7 8 7.2 8 9.5" fill="none" stroke="#fff" stroke-width="1.7"/><rect x="7" y="11" width="2" height="2" fill="#fff"/></svg><svg class="a" style="left:1254px;top:481px" width="5" height="9" viewBox="0 0 5 9"><path d="M0 0 L5 4.5 L0 9 Z" fill="#000"/></svg><div class="a" style="left:916px;top:502px;width:352px;height:25px;background:linear-gradient(180deg,#c3d7ee,#a2bcdc)"></div><div class="t" style="left:923px;top:506px;font-size:12px;color:#000;transform:scaleX(0.942);transform-origin:0 0;">Ereignis 410, Kernel-PnP</div><svg class="a" style="left:1252px;top:512px" width="9" height="5" viewBox="0 0 9 5"><path d="M0 5 L4.5 0 L9 5 Z" fill="#000"/></svg><div class="t" style="left:947px;top:530px;font-size:12px;color:#000;transform:scaleX(0.978);transform-origin:0 0;">Ereigniseigenschaften</div><svg class="a" style="left:921px;top:531px" width="16" height="16" viewBox="0 0 16 16"><rect x="0.5" y="0.5" width="15" height="15" rx="1.5" fill="#fafafa" stroke="#707070"/><rect x="1" y="1" width="14" height="1.5" fill="#e6e6e6"/><path d="M2.5 3.5 L5.5 3.5 L5.5 5.5 L12.5 5.5 L12.5 12.5 L2.5 12.5 Z" fill="#fff" stroke="#9a9aaa"/><rect x="6" y="3.5" width="2" height="1" fill="#c8c8d8"/><rect x="9" y="3.5" width="2" height="1" fill="#c8c8d8"/><rect x="3.8" y="7.5" width="1.5" height="1.5" fill="#10a8f0"/><rect x="6" y="7.8" width="5" height="1" fill="#8a8a8a"/><rect x="3.8" y="9.8" width="1.5" height="1" fill="#8a8a8a"/><rect x="6" y="9.8" width="5" height="1" fill="#8a8a8a"/><rect x="5.5" y="13.5" width="3.5" height="2" fill="#10b0f0"/></svg><div class="t" style="left:947px;top:554px;font-size:12px;color:#000;transform:scaleX(0.975);transform-origin:0 0;">Aufgabe an dieses Ereignis anfügen...</div><svg class="a" style="left:921px;top:555px" width="16" height="16" viewBox="0 0 16 16"><rect x="2.5" y="1.5" width="13" height="14" fill="#f2f2f2" stroke="#8a8a8a"/><rect x="3" y="1" width="13" height="1.2" fill="#8a5a40"/><rect x="3" y="13.5" width="12" height="1" fill="#c8c8c8"/><circle cx="9" cy="7.5" r="4.3" fill="#e4f4f8" stroke="#4a4a4a" stroke-width="1"/><path d="M9 7.5 L9 4.5 A3 3 0 0 1 12 7.5 Z" fill="#f0d890"/><path d="M9 4.5 L9 7.5 L11.5 7.5" fill="none" stroke="#2a3a4a" stroke-width="1"/><path d="M3.5 0 L4.2 2 L6.2 1 L5.2 3 L7.2 3.7 L5.2 4.4 L6.2 6.4 L4.2 5.4 L3.5 7.4 L2.8 5.4 L0.8 6.4 L1.8 4.4 L-0.2 3.7 L1.8 3 L0.8 1 L2.8 2 Z" fill="#ffa810"/></svg><div class="t" style="left:947px;top:578px;font-size:12px;color:#000;">Kopieren</div><svg class="a" style="left:921px;top:579px" width="16" height="16" viewBox="0 0 16 16"><rect x="0.5" y="0.5" width="6.5" height="11" fill="#fff" stroke="#8a8a8a"/><path d="M6.5 4.5 L12.5 4.5 L15.5 7.5 L15.5 15.5 L6.5 15.5 Z" fill="#fff" stroke="#8a8a8a"/><rect x="2" y="3" width="2" height="1" fill="#3a7ad0"/><rect x="2" y="5" width="5" height="1" fill="#3a7ad0"/><rect x="2" y="7" width="5" height="1" fill="#3a7ad0"/><rect x="8" y="7" width="2" height="1" fill="#3a7ad0"/><rect x="8" y="9" width="6" height="1" fill="#3a7ad0"/><rect x="8" y="11" width="6" height="1" fill="#3a7ad0"/></svg><svg class="a" style="left:1254px;top:583px" width="5" height="9" viewBox="0 0 5 9"><path d="M0 0 L5 4.5 L0 9 Z" fill="#000"/></svg><div class="t" style="left:947px;top:602px;font-size:12px;color:#000;transform:scaleX(0.969);transform-origin:0 0;">Ausgewählte Ereignisse speichern...</div><svg class="a" style="left:921px;top:603px" width="16" height="16" viewBox="0 0 16 16"><path d="M1 0 L15 0 L15 15 L1 15 Z" fill="#2c2c2c"/><rect x="3" y="1" width="10" height="7" fill="#efefef"/><rect x="3" y="10" width="10" height="5" fill="#b0b0b0"/><rect x="4" y="10.5" width="2.5" height="3.5" fill="#1a1a1a"/><rect x="8" y="11" width="4" height="3" fill="#d8d8d8"/></svg><div class="a" style="left:921px;top:623px;width:342px;height:1px;background:#e8e8e8"></div><div class="t" style="left:947px;top:627px;font-size:12px;color:#000;">Aktualisieren</div><svg class="a" style="left:921px;top:628px" width="16" height="16" viewBox="0 0 16 16"><path d="M2.5 0.5 L11.5 0.5 L14.5 3.5 L14.5 15.5 L2.5 15.5 Z" fill="#fff" stroke="#8a8a8a"/><path d="M11.5 0.5 L11.5 3.5 L14.5 3.5" fill="#e8e8e8" stroke="#9a9a9a" stroke-width="0.8"/><path d="M11 10.5 A3.6 3.6 0 1 1 10.8 5.5" fill="none" stroke="#20b820" stroke-width="2.2"/><path d="M8.5 9 L12.8 12.2 L13 8 Z" fill="#20b820"/></svg><div class="a" style="left:921px;top:648px;width:342px;height:1px;background:#e8e8e8"></div><div class="t" style="left:947px;top:652px;font-size:12px;color:#000;transform:scaleX(1.08);transform-origin:0 0;">Hilfe</div><svg class="a" style="left:921px;top:653px" width="16" height="16" viewBox="0 0 16 16"><defs><linearGradient id="hpg" x1="0" x2="1"><stop offset="0" stop-color="#2040a8"/><stop offset=".25" stop-color="#2a4ab8"/><stop offset=".3" stop-color="#5a7ee0"/><stop offset="1" stop-color="#4062c8"/></linearGradient></defs><rect x="1" y="0" width="13" height="16" fill="url(#hpg)"/><rect x="1" y="15" width="13" height="1" fill="#18287a"/><path d="M5.5 5 C5.5 2.5 10.5 2.5 10.5 5 C10.5 7 8 7.2 8 9.5" fill="none" stroke="#fff" stroke-width="1.7"/><rect x="7" y="11" width="2" height="2" fill="#fff"/></svg><svg class="a" style="left:1254px;top:657px" width="5" height="9" viewBox="0 0 5 9"><path d="M0 0 L5 4.5 L0 9 Z" fill="#000"/></svg>
</body></html>
